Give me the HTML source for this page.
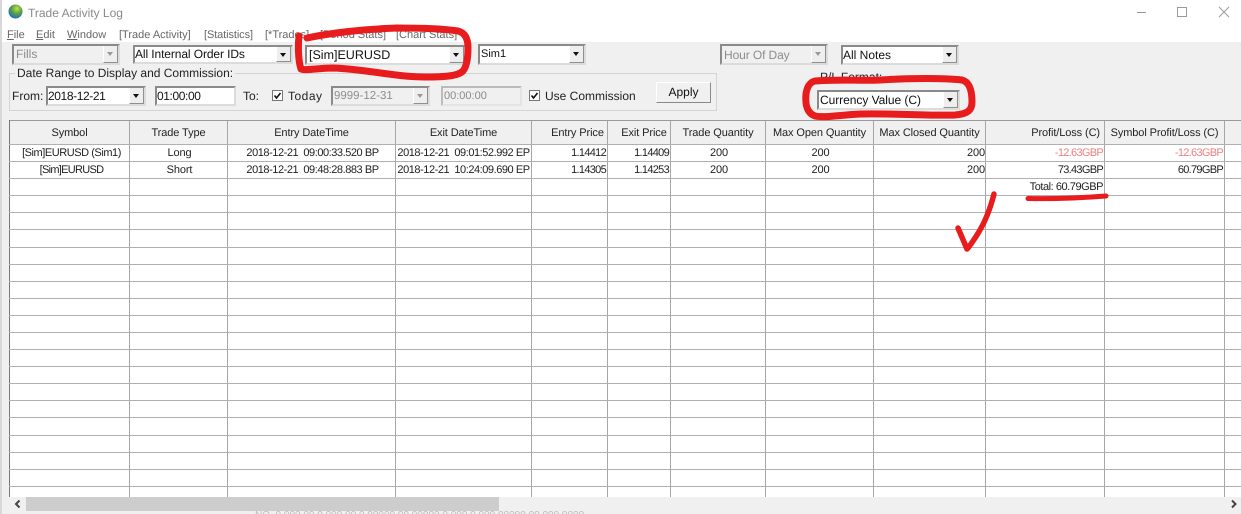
<!DOCTYPE html>
<html>
<head>
<meta charset="utf-8">
<style>
html,body{margin:0;padding:0;width:1241px;height:514px;overflow:hidden;background:#f0f0f0}
body{position:relative;font-family:"Liberation Sans",sans-serif;font-size:12px;color:#222;text-rendering:geometricPrecision}
#w{position:absolute;left:0;top:0;width:1241px;height:514px;filter:blur(.35px)}
.a{position:absolute;white-space:nowrap;line-height:16px}
.c{position:absolute;box-sizing:border-box;background:#fff;border:2px solid;border-color:#8a8a8a #dcdcdc #dcdcdc #8a8a8a;line-height:16px;padding-left:1px;white-space:nowrap;overflow:hidden;color:#111}
.d{background:#f0f0f0;color:#8c8c8c}
.b{position:absolute;right:0;top:0;bottom:0;width:15px;background:#eee;border-right:1px solid #8f8f8f;border-bottom:1px solid #8f8f8f;border-left:1px solid #fff;box-sizing:border-box}
.b:after{content:"";position:absolute;left:3px;top:6px;border:3.500px solid transparent;border-top:4px solid #111;border-bottom:0}
.d .b:after{border-top-color:#999}
.k{position:absolute;box-sizing:border-box;width:11px;height:11px;background:#fff;border:1px solid #777}
.h{position:absolute;top:126px;height:15px;line-height:15px;font-size:11px;text-align:center;color:#222;white-space:nowrap;letter-spacing:-.1px}
.r{text-align:right}
.p{letter-spacing:-.7px}
.t{letter-spacing:-.45px}
.m{color:#666;font-size:11px}
</style>
</head>
<body>
<div id="w">
<div style="position:absolute;left:0;top:0;width:1241px;height:42px;background:#fff"></div>
<div style="position:absolute;left:0;top:0;width:2px;height:514px;background:#d8d8d8"></div>

<svg style="position:absolute;left:8px;top:4px" width="15" height="15" viewBox="0 0 15 15">
<defs><radialGradient id="gl" cx=".6" cy=".3" r=".8"><stop offset="0" stop-color="#c4e050"/><stop offset=".45" stop-color="#5aa040"/><stop offset=".8" stop-color="#2a78b0"/><stop offset="1" stop-color="#1a5a9a"/></radialGradient></defs>
<circle cx="7.500" cy="7.500" r="7" fill="url(#gl)"/></svg>
<div class="a" style="left:28px;top:5px;font-size:12px;color:#8a8a8a">Trade Activity Log</div>

<svg style="position:absolute;left:1130px;top:0" width="111" height="24" viewBox="0 0 111 24" fill="none" stroke="#9a9a9a" stroke-width="1">
<path d="M7 12.500h9"/><rect x="47.500" y="7.500" width="9" height="9"/><path d="M89 7l10 10M99 7L89 17"/></svg>

<div class="a m" style="left:7px;top:27px"><u>F</u>ile</div>
<div class="a m" style="left:36px;top:27px"><u>E</u>dit</div>
<div class="a m" style="left:67px;top:27px"><u>W</u>indow</div>
<div class="a m" style="left:119px;top:27px">[Trade Activity]</div>
<div class="a m" style="left:204px;top:27px;letter-spacing:-.1px">[Statistics]</div>
<div class="a m" style="left:265px;top:27px">[*Trades]</div>
<div class="a m" style="left:320px;top:27px">[Period Stats]</div>
<div class="a m" style="left:396px;top:27px">[Chart Stats]</div>

<div class="c d" style="left:12px;top:44px;width:108px;height:21px;padding-left:2px">Fills<div class="b"></div></div>
<div class="c" style="left:133px;top:45px;width:160px;height:19px;line-height:15px;padding-left:0;letter-spacing:-.1px">All Internal Order IDs<div class="b"></div></div>
<div class="c" style="left:305px;top:45px;width:161px;height:20px;padding-left:2px;font-size:12.500px">[Sim]EURUSD<div class="b"></div></div>
<div class="c" style="left:478px;top:44px;width:108px;height:21px;font-size:11px">Sim1<div class="b"></div></div>
<div class="c d" style="left:720px;top:44px;width:108px;height:21px;padding-left:2px;line-height:18px;letter-spacing:-.1px">Hour Of Day<div class="b"></div></div>
<div class="c" style="left:841px;top:45px;width:118px;height:20px;padding-left:0">All Notes<div class="b"></div></div>

<div style="position:absolute;box-sizing:border-box;left:9px;top:73px;width:708px;height:38px;border:1px solid #d4d4d4"></div>
<div class="a" style="left:15px;top:65px;background:#f0f0f0;padding:0 2px">Date Range to Display and Commission:</div>
<div class="a" style="left:12px;top:88px">From:</div>
<div class="c" style="left:46px;top:86px;width:100px;height:20px;padding-left:0;letter-spacing:-.4px">2018-12-21<div class="b"></div></div>
<div class="c" style="left:155px;top:86px;width:81px;height:20px;padding-left:0;letter-spacing:-.4px">01:00:00</div>
<div class="a" style="left:243px;top:88px">To:</div>
<div class="k" style="left:272px;top:90px"></div>
<svg style="position:absolute;left:272px;top:90px" width="11" height="11"><path d="M2.500 5.500l2 2.500 4-5" fill="none" stroke="#111" stroke-width="1.600"/></svg>
<div class="a" style="left:288px;top:88px;letter-spacing:.5px">Today</div>
<div class="c d" style="left:331px;top:86px;width:99px;height:20px;font-size:11.500px">9999-12-31<div class="b"></div></div>
<div class="c d" style="left:441px;top:86px;width:81px;height:20px;font-size:11px;border-color:#bbb #e4e4e4 #e4e4e4 #bbb">00:00:00</div>
<div class="k" style="left:529px;top:90px"></div>
<svg style="position:absolute;left:529px;top:90px" width="11" height="11"><path d="M2.500 5.500l2 2.500 4-5" fill="none" stroke="#111" stroke-width="1.600"/></svg>
<div class="a" style="left:545px;top:88px">Use Commission</div>
<div style="position:absolute;box-sizing:border-box;left:656px;top:82px;width:55px;height:21px;background:#f0f0f0;border:1px solid;border-color:#fff #8a8a8a #8a8a8a #fff;text-align:center;line-height:18px;color:#111">Apply</div>

<div class="a" style="left:820px;top:69px">P/L Format:</div>
<div class="c" style="left:817px;top:90px;width:143px;height:20px;letter-spacing:-.05px">Currency Value (C)<div class="b"></div></div>

<div style="position:absolute;left:9px;top:121px;width:1232px;height:376px;background:#fff"></div>
<div style="position:absolute;left:9px;top:121px;width:1232px;height:23px;background:#f0f0f0"></div>

<svg style="position:absolute;left:0;top:0" width="1241" height="514" fill="none" stroke="#a6a6a6" stroke-width="1">
<path stroke="#9a9a9a" d="M9 120.500H1241"/>
<path stroke="#777" d="M9.500 120V497"/>
<path d="M129.500 121V497M227.500 121V497M395.500 121V497M531.500 121V497M607.500 121V497M670.500 121V497M765.500 121V497M873.500 121V497M985.500 121V497M1104.500 121V497M1224.500 121V497"/>
<path stroke="#b0b0b0" d="M9 144.500H1241M9 161.500H1241M9 178.500H1241M9 195.500H1241M9 212.500H1241M9 229.500H1241M9 247.500H1241M9 264.500H1241M9 281.500H1241M9 298.500H1241M9 315.500H1241M9 332.500H1241M9 349.500H1241M9 366.500H1241M9 383.500H1241M9 400.500H1241M9 417.500H1241M9 435.500H1241M9 452.500H1241M9 469.500H1241M9 486.500H1241"/>
</svg>

<div class="h" style="left:10px;width:119px">Symbol</div>
<div class="h" style="left:130px;width:97px">Trade Type</div>
<div class="h" style="left:228px;width:167px">Entry DateTime</div>
<div class="h" style="left:396px;width:135px">Exit DateTime</div>
<div class="h" style="left:540px;width:75px">Entry Price</div>
<div class="h" style="left:613px;width:62px">Exit Price</div>
<div class="h" style="left:671px;width:94px">Trade Quantity</div>
<div class="h" style="left:766px;width:107px">Max Open Quantity</div>
<div class="h" style="left:874px;width:111px">Max Closed Quantity</div>
<div class="h r" style="left:986px;width:114px">Profit/Loss (C)</div>
<div class="h" style="left:1105px;width:119px">Symbol Profit/Loss (C)</div>

<div class="h t" style="top:146px;left:12px;width:119px">[Sim]EURUSD (Sim1)</div>
<div class="h" style="top:146px;left:131px;width:97px">Long</div>
<div class="h t" style="top:146px;left:229px;width:167px">2018-12-21&nbsp; 09:00:33.520 BP</div>
<div class="h t" style="top:146px;left:396px;width:135px">2018-12-21&nbsp; 09:01:52.992 EP</div>
<div class="h r p" style="top:146px;left:532px;width:74px">1.14412</div>
<div class="h r p" style="top:146px;left:608px;width:61px">1.14409</div>
<div class="h" style="top:146px;left:672px;width:94px">200</div>
<div class="h" style="top:146px;left:767px;width:107px">200</div>
<div class="h r" style="top:146px;left:875px;width:110px">200</div>
<div class="h r p" style="top:146px;left:986px;width:117px;color:#f08080">-12.63GBP</div>
<div class="h r p" style="top:146px;left:1105px;width:118px;color:#f08080">-12.63GBP</div>

<div class="h p" style="top:163px;left:12px;width:119px">[Sim]EURUSD</div>
<div class="h" style="top:163px;left:131px;width:97px">Short</div>
<div class="h t" style="top:163px;left:229px;width:167px">2018-12-21&nbsp; 09:48:28.883 BP</div>
<div class="h t" style="top:163px;left:396px;width:135px">2018-12-21&nbsp; 10:24:09.690 EP</div>
<div class="h r p" style="top:163px;left:532px;width:74px">1.14305</div>
<div class="h r p" style="top:163px;left:608px;width:61px">1.14253</div>
<div class="h" style="top:163px;left:672px;width:94px">200</div>
<div class="h" style="top:163px;left:767px;width:107px">200</div>
<div class="h r" style="top:163px;left:875px;width:110px">200</div>
<div class="h r p" style="top:163px;left:986px;width:117px">73.43GBP</div>
<div class="h r p" style="top:163px;left:1105px;width:118px">60.79GBP</div>

<div class="h r t" style="top:180px;left:986px;width:117px">Total: 60.79GBP</div>

<div style="position:absolute;left:9px;top:497px;width:1232px;height:14px;background:#f0f0f0"></div>
<div style="position:absolute;left:26px;top:497px;width:473px;height:14px;background:#cdcdcd"></div>
<svg style="position:absolute;left:0;top:0" width="1241" height="514" fill="none" stroke="#444" stroke-width="2">
<path d="M19.500 500.500l-3.500 3.500 3.500 3.500M1232 500.500l3.500 3.500-3.500 3.500"/>
</svg>
<div class="a" style="left:255px;top:511px;font-size:10px;color:#bbb;line-height:10px">NO. 0.000 00 0.000 00 0 00000 00 00000 0.000 0.000 00000 00 000 0000</div>

<svg style="position:absolute;left:0;top:0" width="1241" height="514" fill="none" stroke="#e81c1c" stroke-linecap="round" stroke-linejoin="round">
<path stroke-width="7" d="M307 38C330 33 365 29 397 28C420 28 445 29 458 31C466 33 468 40 468 48C468 58 467 66 463 71C458 76 445 77 425 77C395 77 365 69 333 68C318 68 306 71 301 69C298 60 298 45 299 36"/>
<path stroke-width="7" d="M815 81C840 79 860 81 880 80C910 78 945 78 962 80C970 82 972 92 972 102C972 110 968 114 955 115C925 116 890 113 860 114C840 115 825 118 815 116C807 113 805 105 806 94C807 87 810 82 815 81Z"/>
<path stroke-width="5.500" d="M994 194C990 210 984 224 977 235C973 241 970 246 967 249C964 242 961 235 958 228"/>
<path stroke-width="5" d="M1028 198.500C1050 199 1080 198 1106 196"/>
</svg>
</div>
</body>
</html>
